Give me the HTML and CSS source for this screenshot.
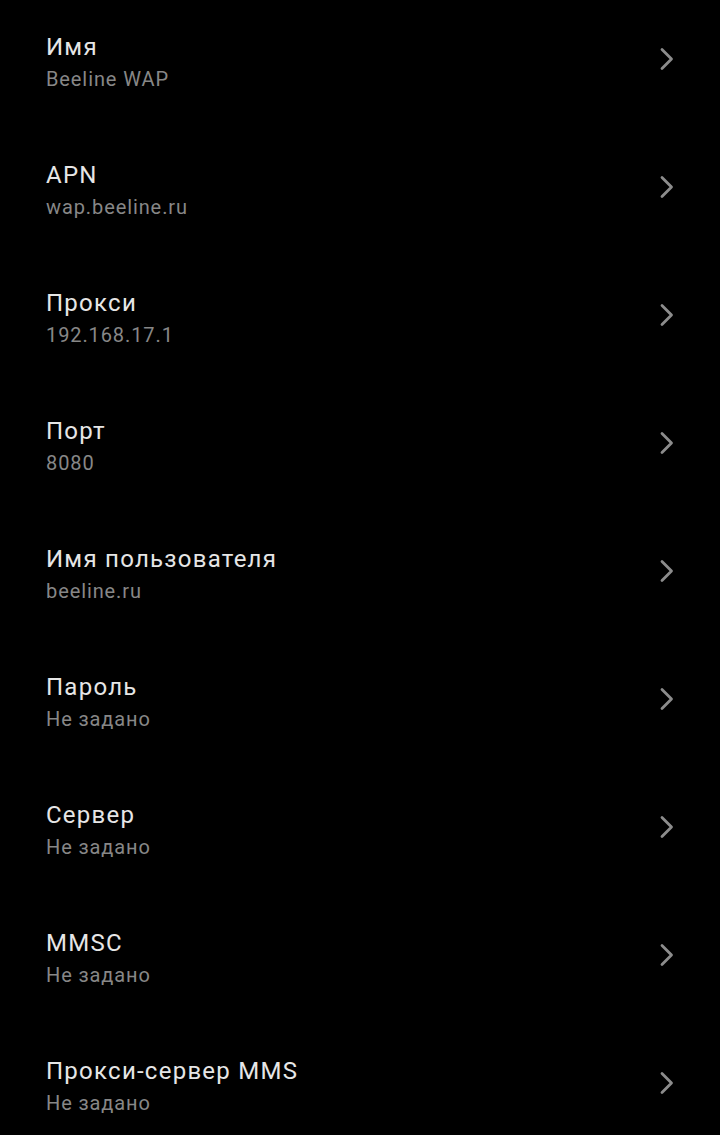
FILE: index.html
```html
<!DOCTYPE html>
<html lang="ru">
<head>
<meta charset="utf-8">
<link rel="stylesheet" href="styles.css">
</head>
<body>
<div class="list">
  <div class="row"><div class="texts"><div class="title">Имя</div><div class="sub">Beeline WAP</div></div><svg class="chev" viewBox="0 0 16 26"><path d="M2 3.5 L11.5 13 L2 22.5"/></svg></div>
  <div class="row"><div class="texts"><div class="title">APN</div><div class="sub">wap.beeline.ru</div></div><svg class="chev" viewBox="0 0 16 26"><path d="M2 3.5 L11.5 13 L2 22.5"/></svg></div>
  <div class="row"><div class="texts"><div class="title">Прокси</div><div class="sub">192.168.17.1</div></div><svg class="chev" viewBox="0 0 16 26"><path d="M2 3.5 L11.5 13 L2 22.5"/></svg></div>
  <div class="row"><div class="texts"><div class="title">Порт</div><div class="sub">8080</div></div><svg class="chev" viewBox="0 0 16 26"><path d="M2 3.5 L11.5 13 L2 22.5"/></svg></div>
  <div class="row"><div class="texts"><div class="title">Имя пользователя</div><div class="sub">beeline.ru</div></div><svg class="chev" viewBox="0 0 16 26"><path d="M2 3.5 L11.5 13 L2 22.5"/></svg></div>
  <div class="row"><div class="texts"><div class="title">Пароль</div><div class="sub">Не задано</div></div><svg class="chev" viewBox="0 0 16 26"><path d="M2 3.5 L11.5 13 L2 22.5"/></svg></div>
  <div class="row"><div class="texts"><div class="title">Сервер</div><div class="sub">Не задано</div></div><svg class="chev" viewBox="0 0 16 26"><path d="M2 3.5 L11.5 13 L2 22.5"/></svg></div>
  <div class="row"><div class="texts"><div class="title">MMSC</div><div class="sub">Не задано</div></div><svg class="chev" viewBox="0 0 16 26"><path d="M2 3.5 L11.5 13 L2 22.5"/></svg></div>
  <div class="row"><div class="texts"><div class="title">Прокси-сервер MMS</div><div class="sub">Не задано</div></div><svg class="chev" viewBox="0 0 16 26"><path d="M2 3.5 L11.5 13 L2 22.5"/></svg></div>
</div>
</body>
</html>
```
FILE: styles.css
```css
html, body {
  margin: 0;
  padding: 0;
  background: #000;
}
body {
  font-family: Roboto, "Noto Sans", sans-serif;
  width: 720px;
  height: 1135px;
  overflow: hidden;
}
.list {
  display: flex;
  flex-direction: column;
  margin-top: -2px;
}
.row {
  height: 128px;
  flex: none;
  display: flex;
  align-items: center;
  padding: 0 44px 0 46px;
}
.texts {
  flex: 1;
  display: flex;
  flex-direction: column;
  gap: 4px;
}
.title {
  color: #e6e6e6;
  font-size: 24px;
  line-height: 30px;
  letter-spacing: 1.25px;
}
.sub {
  color: #878787;
  font-size: 20px;
  line-height: 26px;
  letter-spacing: 0.9px;
}
.chev {
  width: 16px;
  height: 26px;
  margin-bottom: 6px;
  fill: none;
  stroke: #8c8c8c;
  stroke-width: 2.8;
  stroke-linecap: round;
  stroke-linejoin: round;
}
```
